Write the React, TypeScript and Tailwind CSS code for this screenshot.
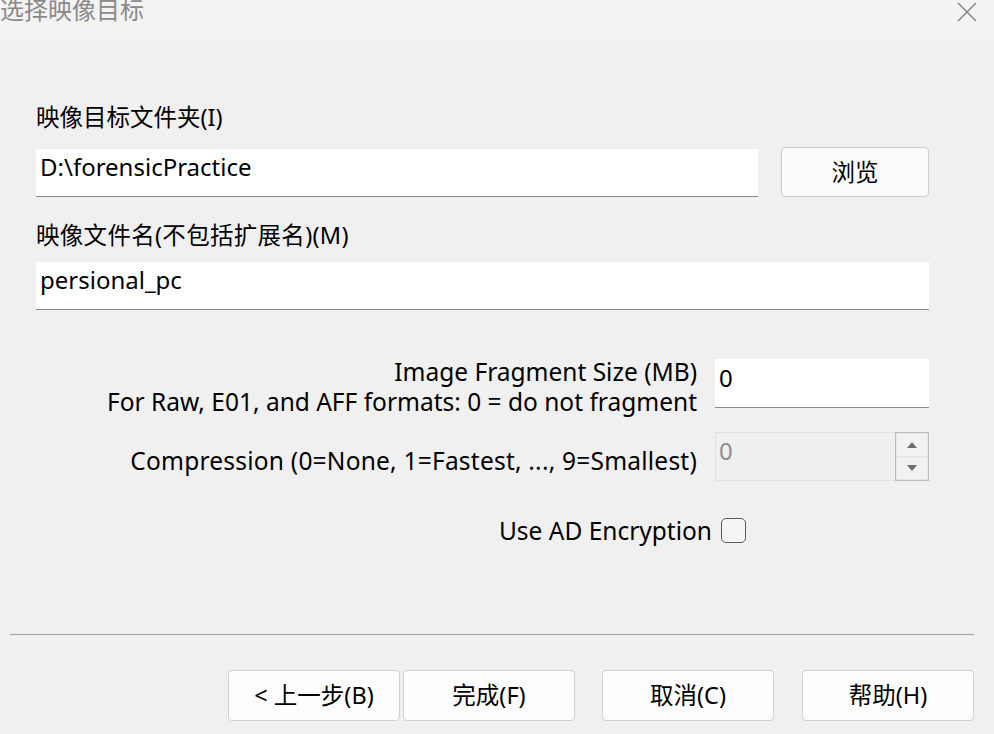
import React from "react";

const font = { fontFamily: '"Noto Sans", "Noto Sans CJK SC", sans-serif' };

function Button({ label, className = "" }: { label: string; className?: string }) {
    return (
        <button
            className={`h-[51px] w-[172px] rounded-[4px] border border-[#d0d0d0] bg-[#fdfdfd] text-[23.5px] text-black ${className}`}
        >
            {label}
        </button>
    );
}

export default function App() {
    return (
        <div
            className="relative w-[994px] h-[734px] overflow-hidden bg-[#f0f0f0] text-black"
            style={font}
        >
            {/* title bar */}
            <div className="h-[40px] bg-[#f3f3f3] flex justify-between">
                <div className="text-[24px] leading-[26px] text-[#8a8a8a] -mt-[3px]">选择映像目标</div>
                <svg width="22" height="22" viewBox="0 0 22 22" className="mr-[16px] mt-[1px]">
                    <path d="M2 2 L20 20 M20 2 L2 20" stroke="#8a8a8a" strokeWidth="1.6" />
                </svg>
            </div>

            <div className="pl-[36px] pr-[65px]">
                <div className="mt-[62px] text-[23.5px] leading-[30px]">映像目标文件夹(I)</div>
                <div className="mt-[15px] flex items-end gap-[23px]">
                    <div className="h-[48px] flex-1 bg-white border-b border-[#8a8a8a] pl-[4px] text-[24px] leading-[36px]">
                        D:\forensicPractice
                    </div>
                    <button className="h-[50px] w-[148px] rounded-[4px] border border-[#cccccc] bg-[#fbfbfb] text-[23.5px] pt-[2px]">
                        浏览
                    </button>
                </div>

                <div className="mt-[23px] text-[23.5px] leading-[30px] tracking-[0.3px]">映像文件名(不包括扩展名)(M)</div>
                <div className="mt-[12px] h-[48px] bg-white border-b border-[#8a8a8a] pl-[4px] text-[24px] leading-[36px]">
                    persional_pc
                </div>

                <div className="mt-[47px] flex justify-end gap-[18px]">
                    <div className="text-right text-[24.5px] leading-[30px]">
                        <div>Image Fragment Size (MB)</div>
                        <div>For Raw, E01, and AFF formats: 0 = do not fragment</div>
                    </div>
                    <div className="mt-[2px] h-[49px] w-[214px] bg-white border-b border-[#8a8a8a] pl-[4px] text-[24px] leading-[38px]">
                        0
                    </div>
                </div>

                <div className="mt-[15px] flex justify-end gap-[18px]">
                    <div className="pt-[14px] text-[24.5px] leading-[30px] tracking-[0.22px]">
                        Compression (0=None, 1=Fastest, ..., 9=Smallest)
                    </div>
                    <div className="h-[49px] w-[214px] flex border border-[#e2e2e2] bg-[#efefef]">
                        <div className="flex-1 pl-[3px] text-[24px] leading-[36px] text-[#8c8c8c]">0</div>
                        <div className="w-[34px] flex flex-col border border-[#bdbdbd] -my-px -mr-px">
                            <div className="flex-1 flex items-center justify-center border border-[#e6e6e6] bg-[#f2f2f2]">
                                <svg width="10" height="6" viewBox="0 0 10 6">
                                    <path d="M0 6 L5 0 L10 6 Z" fill="#6e6e6e" />
                                </svg>
                            </div>
                            <div className="flex-1 flex items-center justify-center border border-[#e6e6e6] bg-[#f2f2f2]">
                                <svg width="10" height="6" viewBox="0 0 10 6">
                                    <path d="M0 0 L10 0 L5 6 Z" fill="#6e6e6e" />
                                </svg>
                            </div>
                        </div>
                    </div>
                </div>

                <div className="mt-[35px] flex items-center justify-end pr-[183px] gap-[9px]">
                    <span className="text-[24.5px] leading-[30px]">Use AD Encryption</span>
                    <span className="w-[25px] h-[25px] rounded-[5px] border-[1.5px] border-[#5a5a5a] bg-[#f5f5f5] -mt-[2px]" />
                </div>
            </div>

            <div className="mx-[10px] mr-[20px] mt-[88px] border-t border-[#a0a0a0]" />

            <div className="mt-[35px] flex justify-end pr-[20px]">
                <Button label="< 上一步(B)" />
                <Button label="完成(F)" className="ml-[3px]" />
                <Button label="取消(C)" className="ml-[27px]" />
                <Button label="帮助(H)" className="ml-[28px]" />
            </div>
        </div>
    );
}
